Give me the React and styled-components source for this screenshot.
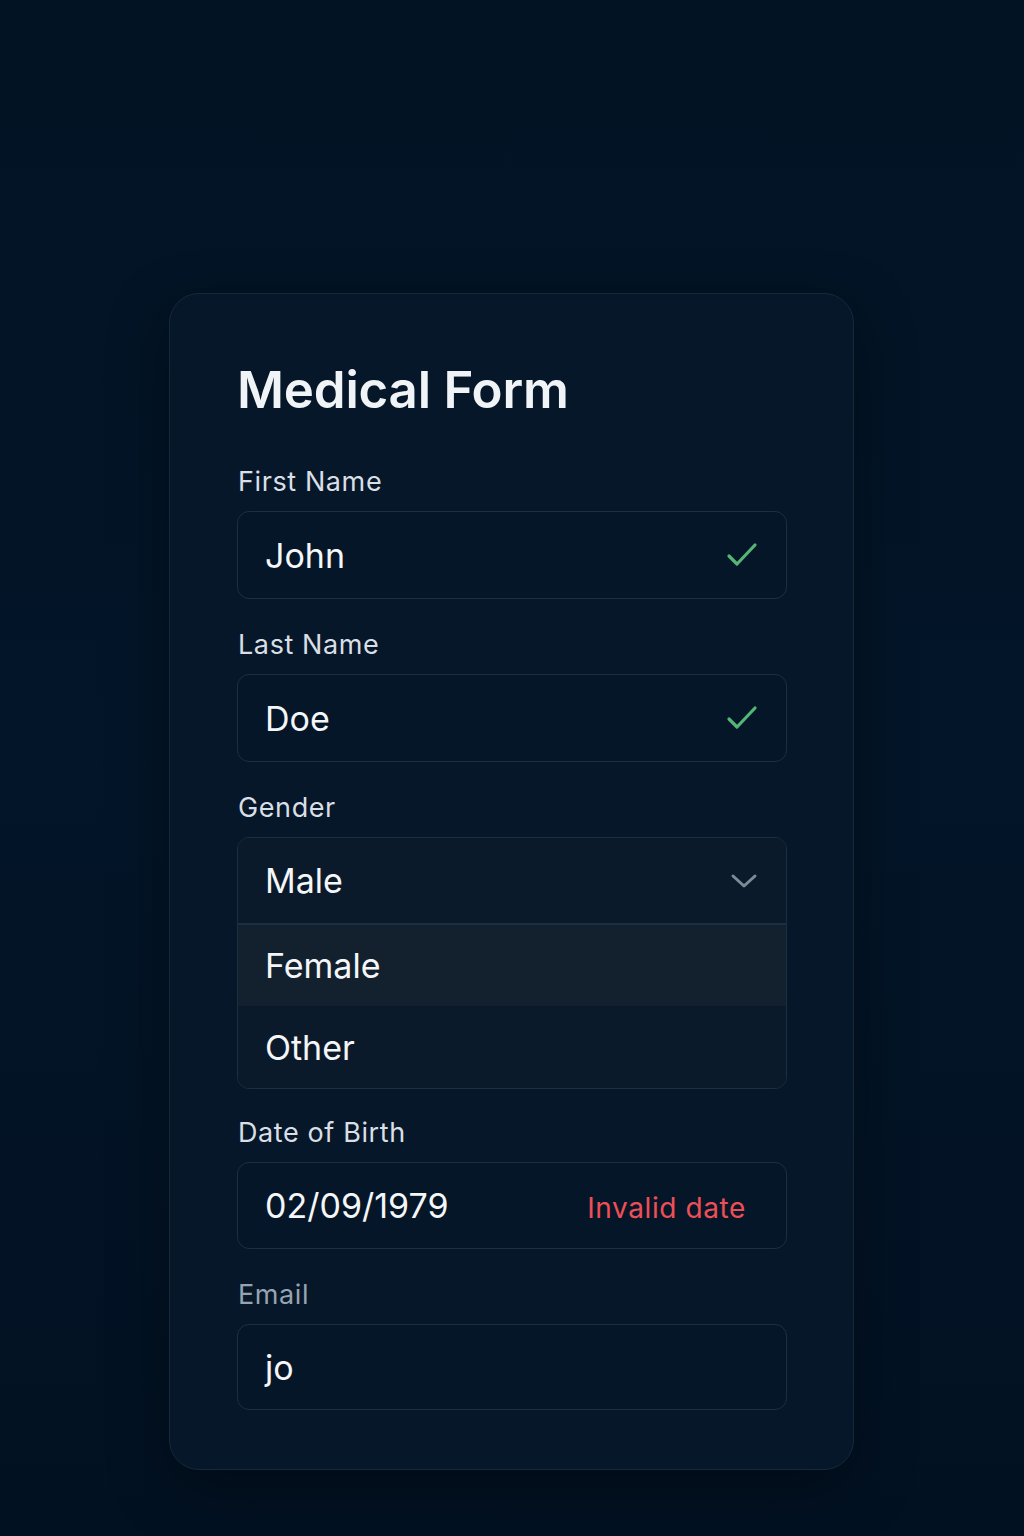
import React from 'react';
import styled, { createGlobalStyle } from 'styled-components';

const GlobalStyle = createGlobalStyle`
  html, body {
    margin: 0;
    padding: 0;
    background: #021324;
  }
  body {
    font-family: Inter, "Noto Sans", "Liberation Sans", sans-serif;
    -webkit-font-smoothing: antialiased;
  }
`;

const Page = styled.main`
  min-height: 1536px;
  background: linear-gradient(180deg, #021324 0%, #031528 50%, #021122 100%);
  display: flex;
  justify-content: flex-start;
  padding: 293px 0 0 169px;
  box-sizing: border-box;
`;

const Card = styled.section`
  width: 685px;
  height: 1177px;
  box-sizing: border-box;
  padding: 66px 66px 60px 67px;
  background: #061729;
  border: 1px solid #15293d;
  border-radius: 30px;
  box-shadow: 0 20px 60px rgba(0, 0, 0, 0.35);
  display: flex;
  flex-direction: column;
  gap: 30px;
`;

const Title = styled.h1`
  margin: 0 0 16px;
  font-size: 51px;
  line-height: 60px;
  font-weight: 600;
  color: #f1f4f7;
  letter-spacing: -0.2px;
`;

const Field = styled.div`
  display: flex;
  flex-direction: column;
`;

const Label = styled.label`
  font-size: 27px;
  line-height: 32px;
  margin: 0 0 13px 1px;
  color: ${p => (p.$muted ? '#97a3b0' : '#d9dfe5')};
  letter-spacing: 0.6px;
`;

const InputBox = styled.div`
  height: ${p => p.$h || 88}px;
  box-sizing: border-box;
  display: flex;
  align-items: center;
  justify-content: space-between;
  padding: 0 28px 0 27px;
  background: #051628;
  border: 1.5px solid #1b2f44;
  border-radius: 12px;
`;

const Value = styled.span`
  font-size: 34px;
  color: #f4f6f8;
`;

const ErrorText = styled.span`
  font-size: 28px;
  color: #ee4f57;
  margin-right: 12px;
  margin-top: 4px;
  letter-spacing: 0.6px;
`;

const Dropdown = styled.div`
  border: 1.5px solid #1b2f44;
  border-radius: 12px;
  overflow: hidden;
  background: #0b1a2a;
  margin-bottom: -2px;
`;

const Option = styled.div`
  height: ${p => p.$h}px;
  box-sizing: border-box;
  display: flex;
  align-items: center;
  justify-content: space-between;
  padding: 0 28px 0 27px;
  background: ${p => (p.$active ? '#13212f' : '#0b1a2a')};
  border-bottom: ${p => (p.$divider ? '2px solid #1b2f44' : 'none')};
`;

const Check = () => (
  <svg width="32" height="28" viewBox="0 0 32 28" fill="none">
    <path d="M3 15 L11 23 L29 4" stroke="#55b575" strokeWidth="3.2" strokeLinecap="round" strokeLinejoin="round" />
  </svg>
);

const Chevron = () => (
  <svg width="28" height="18" viewBox="0 0 28 18" fill="none">
    <path d="M3 4 L14 14 L25 4" stroke="#7d8b98" strokeWidth="3" strokeLinecap="round" strokeLinejoin="round" />
  </svg>
);

export default function App() {
  return (
    <Page>
      <GlobalStyle />
      <Card>
        <Title>Medical Form</Title>

        <Field>
          <Label>First Name</Label>
          <InputBox>
            <Value>John</Value>
            <Check />
          </InputBox>
        </Field>

        <Field>
          <Label>Last Name</Label>
          <InputBox>
            <Value>Doe</Value>
            <Check />
          </InputBox>
        </Field>

        <Field>
          <Label>Gender</Label>
          <Dropdown>
            <Option $h={87} $divider>
              <Value>Male</Value>
              <Chevron />
            </Option>
            <Option $h={81} $active>
              <Value>Female</Value>
            </Option>
            <Option $h={82}>
              <Value>Other</Value>
            </Option>
          </Dropdown>
        </Field>

        <Field>
          <Label>Date of Birth</Label>
          <InputBox $h={87}>
            <Value>02/09/1979</Value>
            <ErrorText>Invalid date</ErrorText>
          </InputBox>
        </Field>

        <Field>
          <Label $muted>Email</Label>
          <InputBox $h={86}>
            <Value>jo</Value>
          </InputBox>
        </Field>
      </Card>
    </Page>
  );
}
